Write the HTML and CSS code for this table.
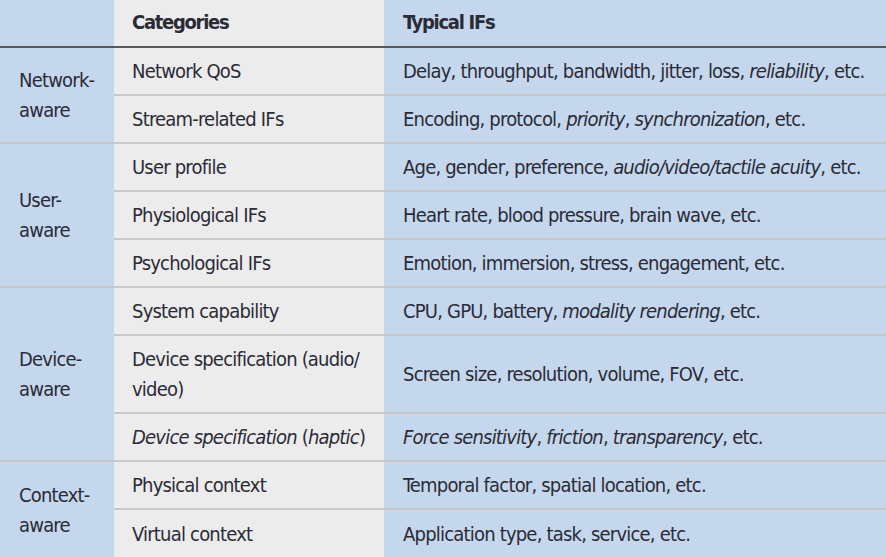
FILE: index.html
```html
<!DOCTYPE html>
<html>
<head>
<meta charset="utf-8">
<link rel="stylesheet" href="styles.css">
</head>
<body>
<table class="ift">
  <colgroup>
    <col class="c1"><col class="c2"><col class="c3">
  </colgroup>
  <thead>
    <tr class="head">
      <th class="grp"></th>
      <th class="cat">Categories</th>
      <th class="typ">Typical IFs</th>
    </tr>
  </thead>
  <tbody>
    <tr>
      <td class="grp" rowspan="2">Network-<br>aware</td>
      <td class="cat">Network QoS</td>
      <td class="typ">Delay, throughput, bandwidth, jitter, loss, <em>reliability</em>, etc.</td>
    </tr>
    <tr>
      <td class="cat">Stream-related IFs</td>
      <td class="typ">Encoding, protocol, <em>priority</em>, <em>synchronization</em>, etc.</td>
    </tr>
    <tr>
      <td class="grp" rowspan="3">User-<br>aware</td>
      <td class="cat">User profile</td>
      <td class="typ">Age, gender, preference, <em>audio/video/tactile acuity</em>, etc.</td>
    </tr>
    <tr>
      <td class="cat">Physiological IFs</td>
      <td class="typ">Heart rate, blood pressure, brain wave, etc.</td>
    </tr>
    <tr>
      <td class="cat">Psychological IFs</td>
      <td class="typ">Emotion, immersion, stress, engagement, etc.</td>
    </tr>
    <tr>
      <td class="grp" rowspan="3">Device-<br>aware</td>
      <td class="cat">System capability</td>
      <td class="typ">CPU, GPU, battery, <em>modality rendering</em>, etc.</td>
    </tr>
    <tr class="tall">
      <td class="cat">Device specification (audio/<br>video)</td>
      <td class="typ">Screen size, resolution, volume, FOV, etc.</td>
    </tr>
    <tr>
      <td class="cat"><em>Device specification</em> (<em>haptic</em>)</td>
      <td class="typ"><em>Force sensitivity</em>, <em>friction</em>, <em>transparency</em>, etc.</td>
    </tr>
    <tr>
      <td class="grp nob" rowspan="2">Context-<br>aware</td>
      <td class="cat">Physical context</td>
      <td class="typ">Temporal factor, spatial location, etc.</td>
    </tr>
    <tr class="final">
      <td class="cat">Virtual context</td>
      <td class="typ">Application type, task, service, etc.</td>
    </tr>
  </tbody>
</table>
</body>
</html>
```

FILE: styles.css
```css
html, body {
  margin: 0;
  padding: 0;
  background: #c5d7ec;
}

.ift {
  width: 886px;
  border-collapse: collapse;
  table-layout: fixed;
  font-family: "DejaVu Sans Condensed", "Liberation Sans", sans-serif;
  font-size: 20px;
  letter-spacing: -0.8px;
  color: #2b2b36;
}

.c1 { width: 114px; }
.c2 { width: 270px; }
.c3 { width: 502px; }

.ift th,
.ift td {
  padding: 0 0 0 18px;
  text-align: left;
  vertical-align: middle;
  line-height: 30px;
  height: 48px;
  white-space: nowrap;
  box-sizing: border-box;
  border-bottom: 2px solid #c8c8c8;
}

.ift em { font-style: italic; }

.head th {
  height: 47px;
  font-weight: bold;
  letter-spacing: -1.3px;
  border-bottom: 2px solid #58595b;
  padding-bottom: 3px;
}

.grp { background: #c5d7ec; padding-left: 19px !important; }
.cat { background: #ececec; }
.typ { background: #c5d7ec; padding-left: 19px !important; }

.tall td { height: 78px; }

.final td,
.nob { border-bottom: none !important; }
```
